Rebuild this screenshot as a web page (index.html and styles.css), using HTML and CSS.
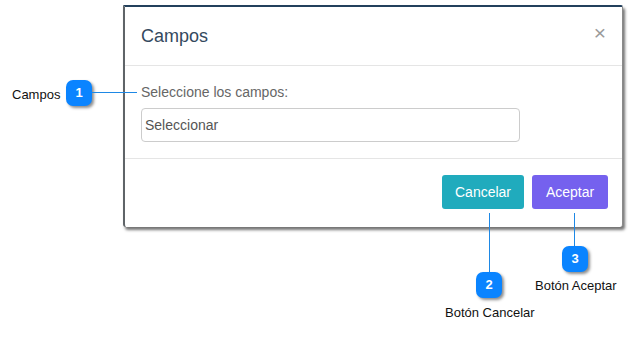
FILE: index.html
```html
<!DOCTYPE html>
<html lang="en">
  <head>
    <meta charset="utf-8" />
    <title>Campos</title>
    <link rel="stylesheet" href="styles.css">
  </head>
  <body>
    <div class="stage">
      <div class="modal">
        <div class="modal-header">
          <h4 class="modal-title">Campos</h4>
          <span class="close">&times;</span>
        </div>
        <div class="modal-body">
          <label class="field-label">Seleccione los campos:</label>
          <div class="select-box">Seleccionar</div>
        </div>
        <div class="modal-footer">
          <button class="btn btn-cancel">Cancelar</button>
          <button class="btn btn-accept">Aceptar</button>
        </div>
      </div>

      <!-- callouts -->
      <div class="callout-text text-1">Campos</div>
      <div class="marker marker-1">1</div>
      <div class="line line-h line-1"></div>

      <div class="line line-v line-2"></div>
      <div class="marker marker-2">2</div>
      <div class="callout-text text-2">Botón Cancelar</div>

      <div class="line line-v line-3"></div>
      <div class="marker marker-3">3</div>
      <div class="callout-text text-3">Botón Aceptar</div>
    </div>
  </body>
</html>
```

FILE: styles.css
```css
body {
  margin: 0;
  background-color: #fff;
  font-family: "Liberation Sans", Arial, sans-serif;
}
.stage {
  position: relative;
  width: 633px;
  height: 337px;
  overflow: hidden;
}
.modal {
  position: absolute;
  left: 123px;
  top: 5px;
  width: 497px;
  height: 220px;
  background-color: #fff;
  border-top: 2px solid #23405c;
  border-left: 2px solid #5f6468;
  border-right: 1px solid #8a8a8a;
  border-radius: 0 2px 3px 3px;
  box-shadow: 2px 3px 3px rgba(0, 0, 0, 0.55);
  display: flex;
  flex-direction: column;
}
.modal-header {
  height: 58px;
  padding: 0 16px;
  display: flex;
  align-items: center;
  justify-content: space-between;
  border-bottom: 1px solid #e5e5e5;
}
.modal-title {
  margin: 0;
  font-size: 18px;
  font-weight: normal;
  color: #34495e;
}
.close {
  font-size: 21px;
  color: #9a9a9a;
  line-height: 1;
  margin-bottom: 8px;
}
.modal-body {
  padding: 16px;
  border-bottom: 1px solid #e5e5e5;
}
.field-label {
  display: block;
  font-size: 14px;
  color: #666;
  line-height: 20px;
  margin-bottom: 6px;
}
.select-box {
  width: 374px;
  height: 32px;
  border: 1px solid #ccc;
  border-radius: 4px;
  padding-left: 3px;
  font-size: 14px;
  line-height: 32px;
  color: #555;
}
.modal-footer {
  flex: 1;
  display: flex;
  justify-content: flex-end;
  align-items: flex-start;
  gap: 8px;
  padding: 16px 14px 0 0;
}
.btn {
  height: 34px;
  border: none;
  border-radius: 3px;
  color: #fff;
  font-family: "Liberation Sans", Arial, sans-serif;
  font-size: 14px;
  padding: 0 12px;
}
.btn-cancel {
  width: 82px;
  background-color: #20abbd;
}
.btn-accept {
  width: 76px;
  background-color: #7561ee;
}
.marker {
  position: absolute;
  width: 26px;
  height: 26px;
  border-radius: 7px;
  background-color: #0a84ff;
  color: #fff;
  font-size: 13px;
  font-weight: bold;
  text-align: center;
  line-height: 26px;
  box-shadow: 2px 2px 3px rgba(0, 0, 0, 0.45);
}
.marker-1 {
  left: 66px;
  top: 80px;
}
.marker-2 {
  left: 476px;
  top: 272px;
}
.marker-3 {
  left: 562px;
  top: 246px;
}
.line {
  position: absolute;
  background-color: #1e88e5;
}
.line-h {
  height: 1px;
}
.line-v {
  width: 1px;
}
.line-1 {
  left: 92px;
  top: 92px;
  width: 45px;
}
.line-2 {
  left: 489px;
  top: 213px;
  height: 59px;
}
.line-3 {
  left: 574px;
  top: 213px;
  height: 33px;
}
.callout-text {
  position: absolute;
  font-size: 13px;
  color: #111;
  white-space: nowrap;
}
.text-1 {
  left: 12px;
  top: 87px;
}
.text-2 {
  left: 445px;
  top: 305px;
}
.text-3 {
  left: 535px;
  top: 278px;
}
```
